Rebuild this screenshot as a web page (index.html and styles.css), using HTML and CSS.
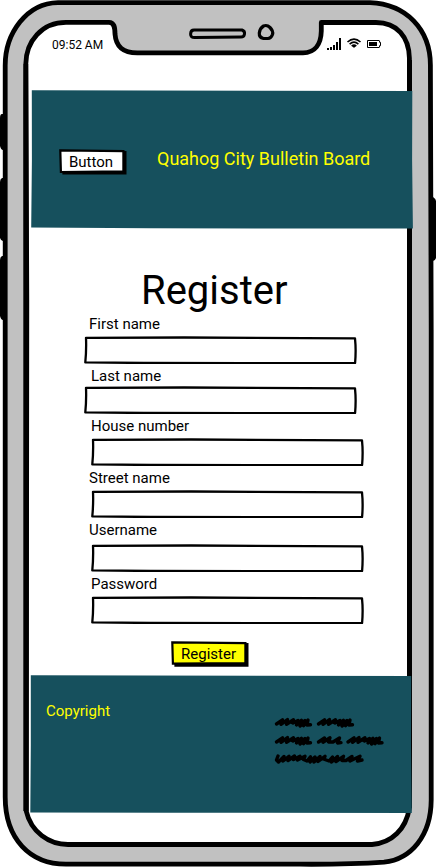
FILE: index.html
```html
<!DOCTYPE html>
<html lang="en">
<head>
<meta charset="utf-8">
<title>Quahog City Bulletin Board</title>
<link rel="stylesheet" href="styles.css">
</head>
<body>
<svg width="0" height="0" class="defs" aria-hidden="true">
  <symbol id="field-outline" viewBox="0 0 273 28" preserveAspectRatio="none">
    <path d="M2 1.8 L100 1.5 L271 2.3 Q272.2 14 271.1 27 L160 27.2 L60 27 L1.3 26.4 Q2.5 14 2 1.8Z" fill="#fff" stroke="#000" stroke-width="2.3" stroke-linejoin="round"/>
  </symbol>
</svg>
<div class="phone">
  <svg class="frame" viewBox="0 0 436 867" aria-hidden="true">
    <g fill="#000">
      <path d="M5 114H2Q0 114 0 118V146Q1 150 3 150H5ZM5 178H2Q0 179 0 182V238Q1 241 3 241H5ZM5 256H2Q0 257 0 260V316Q1 320 3 320H5Z"/>
      <path d="M429 197H433Q436 199 436 201V258Q435 261 432 261H429Z"/>
    </g>
    <path fill="#c1c1c1" fill-rule="evenodd" stroke="#000" stroke-width="4.8" stroke-linejoin="round" d="M58 2.6H370C406 4 430.3 29 430.4 65L431.2 330V800C431 836 411 859 384 862.2Q350 864.5 300 864.2H66C30 864 5.2 839 5.2 797V66C5 33 27 3 58 2.6Z
      M66 22.3C42 22.3 26 41 25.8 64L26.2 300V811C31 832 49 844.5 68 844.5H372C392 843 406 829 409.4 808V58C409 37 397 22.5 376 22.5H321.3V31C321 44 315 52.8 303 52.8H138C123 53 116 47 115 34C115 27 114 22.3 109 22.3Z"/>
    <path d="M23.6 64L23.4 100V811H28.7L29.2 300L28.2 64ZM407 60V808H412V60Z"/>
    <path d="M194 30H242Q245 31 244.5 34Q244 37.1 241 37.1L195 37.6Q190.5 37.8 190.6 34Q190.7 30 194 30Z" fill="#c1c1c1" stroke="#000" stroke-width="3"/>
    <path d="M263.5 26Q267 24.5 270 27.5Q273.5 31 272.5 34.5Q271 38.5 268 38.5H263.5Q259 37.5 259.3 33Q260 28 263.5 26Z" fill="#c1c1c1" stroke="#000" stroke-width="3.2" stroke-linejoin="round"/>
  </svg>

  <div class="screen">
    <div class="status">
      <span class="time">09:52 AM</span>
      <svg class="status-icons" viewBox="0 0 56 14" aria-hidden="true">
        <path d="M0 11h2v2H0zM3 10h2v3H3zM6 8h2v5H6zM9 5h2v8H9zM12 1h2v12h-2z"/>
        <g fill="none" stroke="#000" stroke-width="1.6">
          <path d="M20.5 5Q27 -.8 33.5 5M22.6 7.1Q27 3.3 31.4 7.1M24.7 9.1Q27 7.1 29.3 9.1"/>
        </g>
        <path d="M25.4 9.2Q27 8 28.6 9.2L27 11Z"/>
        <path d="M40.5 3.5H52Q52.5 3.5 52.5 4V5.3H53.5V8.7H52.5V10Q52.5 10.5 52 10.5H40.5Z" fill="#fff" stroke="#000" stroke-width="1"/>
        <path d="M42 5h8v4h-8z"/>
      </svg>
    </div>

    <header class="masthead">
      <svg class="backdrop" viewBox="0 0 382 139" preserveAspectRatio="none" aria-hidden="true"><path d="M.8 .3 L381.3 1 L381.1 70 L381.9 138.5 L120 138.3 L.2 137.6 L.9 70Z" fill="#16505d"/></svg>
      <button class="button">
        <svg class="backdrop" viewBox="0 0 68 26" aria-hidden="true"><path d="M3 3.5L67.5 2V25.6H3.4Z"/><path d="M1.3 1.4L64.4 2.1V22.3L1.9 23Z" fill="#fff" stroke="#000" stroke-width="2.2"/></svg>
        <span>Button</span>
      </button>
      <div class="brand">Quahog City Bulletin Board</div>
    </header>

    <main>
      <h1>Register</h1>
      <form class="fields">
        <div class="field"><label for="first">First name</label><div class="entry"><svg class="backdrop"><use href="#field-outline"/></svg><input id="first"></div></div>
        <div class="field snug"><label for="last" class="inset">Last name</label><div class="entry"><svg class="backdrop"><use href="#field-outline"/></svg><input id="last"></div></div>
        <div class="field shifted"><label for="house">House number</label><div class="entry"><svg class="backdrop"><use href="#field-outline"/></svg><input id="house"></div></div>
        <div class="field shifted"><label for="street" class="outset">Street name</label><div class="entry"><svg class="backdrop"><use href="#field-outline"/></svg><input id="street"></div></div>
        <div class="field shifted loose"><label for="user" class="outset">Username</label><div class="entry"><svg class="backdrop"><use href="#field-outline"/></svg><input id="user"></div></div>
        <div class="field shifted"><label for="pass">Password</label><div class="entry"><svg class="backdrop"><use href="#field-outline"/></svg><input id="pass" type="password"></div></div>
        <button type="button" class="button submit">
          <svg class="backdrop" viewBox="0 0 78 26" aria-hidden="true"><path d="M3 3.5L77.5 2V25.7H3.4Z"/><path d="M1.3 1.4L74.4 2.1V22L1.9 22.7Z" fill="#ff0" stroke="#000" stroke-width="2.2"/></svg>
          <span>Register</span>
        </button>
      </form>
    </main>

    <footer>
      <svg class="backdrop" viewBox="0 0 382 138" preserveAspectRatio="none" aria-hidden="true"><path d="M.8 .3 L381.2 1 L381 70 L381.8 138 L140 137.8 L.3 137.4 L.8 70Z" fill="#16505d"/></svg>
      <span class="copyright">Copyright</span>
      <svg class="scribble" viewBox="0 0 112 52" aria-hidden="true">
        <g fill="none" stroke="#000" stroke-width="3.4" stroke-linecap="round" stroke-linejoin="round">
          <path id="word" d="M2.5 10L8.5 5.8L7 10.3L13.5 5.6L12.5 10.3L19.5 5.8L17.5 8.3L19 9L24 6.5L22.5 11L27.5 6.3L26 12L31 6.5L29.5 11.7L34 6L33 11L36.5 10.8"/>
          <use href="#word" x="42"/>
          <use href="#word" y="18"/>
          <path d="M44.5 28L50.5 24L49 28.2L56 23.8L54.5 28L59 28L65.5 24L63.5 29L67 28.6"/>
          <use href="#word" x="71.5" y="18"/>
          <path d="M4 42L2.5 46L4.5 48L10 42.5L9 47L15 42.3L14 46.5L20.5 42L19.5 45.5L26 42.3L23.5 46L31 42.3L29.5 45.5L33 47L36.5 42.8L36 48L41 43L40 48L46 42.5L44 47.5L51 42.3L49.5 45L55 47L58.5 43L57.5 48L63.5 42.5L62 47.5L69.5 42.3L68 46.5L72 46.5L78 42.5L76 47L86 42.3L83.5 47L88 46"/>
        </g>
      </svg>
    </footer>
  </div>
</div>
</body>
</html>
```
FILE: styles.css
```css
* { box-sizing: border-box; }
body { margin: 0; background: #fff; color: #000; font: 15px/20px Roboto, sans-serif; }
.defs { position: absolute; }
.phone { position: relative; width: 436px; height: 867px; overflow: hidden; }
.frame { position: absolute; inset: 0; width: 436px; height: 867px; }
.screen { position: relative; display: flex; flex-direction: column; height: 867px; }
.backdrop { position: absolute; inset: 0; width: 100%; height: 100%; z-index: -1; }

.status { height: 90px; padding: 37px 53px 0 52px; display: flex; justify-content: space-between; align-items: flex-start; }
.time { font-size: 12px; line-height: 16px; }
.status-icons { width: 56px; height: 14px; }

.masthead { position: relative; isolation: isolate; width: 382px; height: 139px; margin-left: 31px; padding: 59px 0 0 28px; display: flex; align-items: flex-start; }
.button { position: relative; isolation: isolate; width: 68px; height: 26px; padding: 3px 4px 3px 0; border: 0; background: none; color: #000; font: 15px/20px Roboto, sans-serif; text-align: center; }
.brand { margin-left: 30px; font-size: 18px; line-height: 20px; color: #ff0; white-space: nowrap; }

main { height: 446px; }
h1 { margin: 38px 0 -1px 141px; font-weight: 400; font-size: 40px; line-height: 48px; }
.fields { display: flex; flex-direction: column; gap: 2px; margin-left: 84px; }
.field { display: flex; flex-direction: column; gap: 2px; }
.field label { margin-left: 5px; line-height: 20px; }
.field .inset { margin-left: 7px; }
.shifted { margin-left: 7px; }
.shifted label { margin-left: 0; }
.shifted .outset { margin-left: -2px; }
.snug { gap: 0; }
.loose { gap: 4px; }
.entry { position: relative; isolation: isolate; width: 273px; height: 28px; }
.entry input { display: block; width: 100%; height: 100%; padding: 0 8px; border: 0; background: transparent; font: inherit; }
.submit { width: 78px; margin: 15px 0 0 87px; padding-right: 3px; }

footer { position: relative; isolation: isolate; width: 382px; height: 138px; margin-left: 30px; padding: 26px 26px 0 16px; display: flex; justify-content: space-between; align-items: flex-start; }
.copyright { color: #ff0; }
.scribble { width: 112px; height: 52px; margin-top: 13px; }
```
